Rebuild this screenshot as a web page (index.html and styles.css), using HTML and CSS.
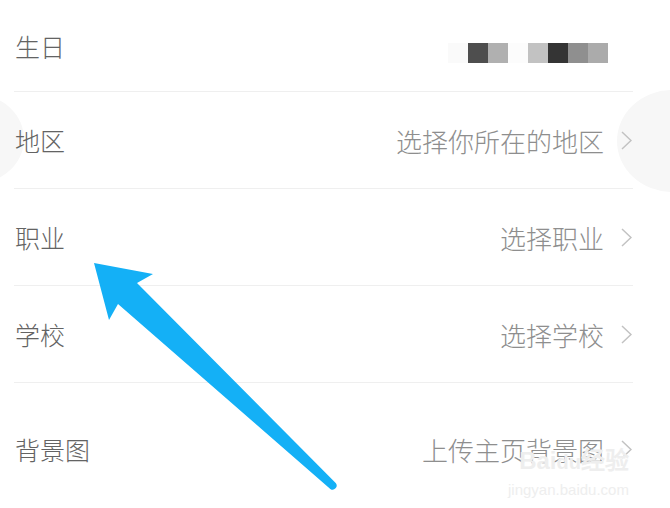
FILE: index.html
```html
<!DOCTYPE html>
<html lang="zh-CN">
<head>
<meta charset="UTF-8">
<meta name="viewport" content="width=device-width, initial-scale=1.0">
<title>编辑资料</title>
<link rel="stylesheet" href="styles.css">
</head>
<body>

<div class="page">
  <div class="blob blob-left"></div>
  <div class="blob blob-right"></div>

  <ul class="list">
    <li class="row row-first">
      <span class="label">生日</span>
      <span class="mosaic">
        <i class="m1"></i><i class="m2"></i><i class="m3"></i><i class="m4"></i><i class="m5"></i><i class="m6"></i><i class="m7"></i><i class="m8"></i>
      </span>
    </li>
    <li class="row">
      <span class="label">地区</span>
      <span class="value">选择你所在的地区</span>
      <svg class="chev" viewBox="0 0 11 19"><path d="M1 1 L10 9.5 L1 18" /></svg>
    </li>
    <li class="row">
      <span class="label">职业</span>
      <span class="value">选择职业</span>
      <svg class="chev" viewBox="0 0 11 19"><path d="M1 1 L10 9.5 L1 18" /></svg>
    </li>
    <li class="row">
      <span class="label">学校</span>
      <span class="value">选择学校</span>
      <svg class="chev" viewBox="0 0 11 19"><path d="M1 1 L10 9.5 L1 18" /></svg>
    </li>
    <li class="row row-last">
      <span class="label">背景图</span>
      <span class="value">上传主页背景图</span>
      <svg class="chev" viewBox="0 0 11 19"><path d="M1 1 L10 9.5 L1 18" /></svg>
    </li>
  </ul>

  <!-- annotation arrow drawn over the screenshot -->
  <svg class="arrow" width="670" height="508" viewBox="0 0 670 508">
    <path d="M94 263 L153 274 L137 283 L335.7 483.1 A4 4 0 0 1 330.3 488.9 L118 304 L109 320 Z" fill="#14b0f6"/>
  </svg>

  <div class="watermark">
    <span class="wm-logo">Bai<b>du</b>经验</span>
    <span class="wm-url">jingyan.baidu.com</span>
  </div>
</div>

</body>
</html>
```

FILE: styles.css
```css
body {
  margin: 0;
  background: #fff;
  font-family: "Noto Sans CJK SC", "Noto Sans", sans-serif;
}

.page {
  position: relative;
  width: 670px;
  height: 508px;
  overflow: hidden;
}

/* faint round shapes peeking from the edges */
.blob {
  position: absolute;
  border-radius: 50%;
  background: #f7f7f7;
}
.blob-left {
  left: -70px;
  top: 95px;
  width: 94px;
  height: 88px;
}
.blob-right {
  left: 617px;
  top: 90px;
  width: 110px;
  height: 102px;
}

.list {
  position: relative;
  list-style: none;
  margin: 0 37px 0 14px;
  padding: 0;
}

.row {
  display: flex;
  align-items: center;
  height: 96px;
  border-bottom: 1px solid #efefef;
}
.row-first {
  height: 91px;
}
.row-last {
  height: 132px;
  border-bottom: none;
}

.label {
  font-size: 25px;
  font-weight: 300;
  color: #636363;
  padding-left: 1px;
}

.value {
  margin-left: auto;
  font-size: 26px;
  font-weight: 300;
  color: #8e8e8e;
}

.chev {
  width: 11px;
  height: 19px;
  margin-left: 17px;
  margin-right: 1px;
}
.chev path {
  fill: none;
  stroke: #c2c2c2;
  stroke-width: 1.5;
}

.mosaic {
  display: flex;
  margin-left: auto;
  margin-right: 25px;
  margin-top: 14px;
}
.mosaic i {
  display: block;
  width: 20px;
  height: 20px;
}
.m1 { background: #fafafa; }
.m2 { background: #4e4e4e; }
.m3 { background: #b0b0b0; }
.m4 { background: #fcfcfc; }
.m5 { background: #c2c2c2; }
.m6 { background: #343434; }
.m7 { background: #8f8f8f; }
.m8 { background: #ababab; }

.arrow {
  position: absolute;
  left: 0;
  top: 0;
}

.watermark {
  position: absolute;
  left: 508px;
  top: 448px;
  display: flex;
  flex-direction: column;
  align-items: flex-end;
  color: #eeeeee;
  font-family: "Liberation Sans", sans-serif;
}
.wm-logo {
  font-size: 24px;
  font-weight: bold;
  line-height: 26px;
}
.wm-logo b {
  font-size: 20px;
}
.wm-url {
  font-size: 15px;
  line-height: 18px;
  margin-top: 6px;
}
```
